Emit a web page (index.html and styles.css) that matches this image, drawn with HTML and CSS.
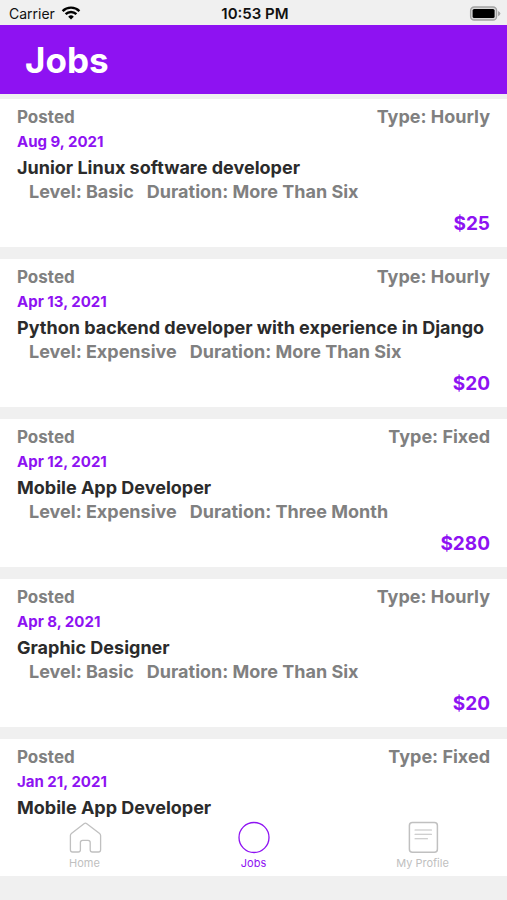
FILE: index.html
```html
<!DOCTYPE html>
<html lang="en">
<head>
<meta charset="utf-8">
<meta name="viewport" content="width=device-width, initial-scale=1">
<title>Jobs</title>
<link rel="stylesheet" href="styles.css">
</head>
<body>
<div class="app">
  <div class="status">
    <div class="carrier">
      <span>Carrier</span>
      <svg width="20" height="15" viewBox="0 0 20 15" fill="none" stroke="#000" stroke-width="2.4" aria-hidden="true">
        <path d="M1.6 5.1a12 12 0 0 1 16.8 0"/>
        <path d="M4.6 8.2a7.7 7.7 0 0 1 10.8 0"/>
        <path d="M10 13.5 7.2 10.7a4 4 0 0 1 5.6 0z" fill="#000" stroke="none"/>
      </svg>
    </div>
    <span class="clock">10:53 PM</span>
    <svg class="battery" width="32" height="16" viewBox="0 0 32 16" aria-hidden="true">
      <rect x="1.6" y="1" width="26" height="13" rx="3.6" fill="#d8d8d8" stroke="#a3a3a3" stroke-width="1.3"/>
      <path d="M29 5q2.4 1 2.4 2.6t-2.4 2.6z" fill="#a8a8a8"/>
      <rect x="3.6" y="3" width="22" height="9" rx="1.6" fill="#000"/>
    </svg>
  </div>
  <header class="header"><h1>Jobs</h1></header>
  <main class="list">
    <article class="job">
      <div class="top"><span class="posted">Posted</span><span class="meta">Type: Hourly</span></div>
      <time class="date">Aug 9, 2021</time>
      <h2>Junior Linux software developer</h2>
      <div class="details meta"><span>Level: Basic</span><span>Duration: More Than Six</span></div>
      <div class="price">$25</div>
    </article>
    <article class="job">
      <div class="top"><span class="posted">Posted</span><span class="meta">Type: Hourly</span></div>
      <time class="date">Apr 13, 2021</time>
      <h2>Python backend developer with experience in Django</h2>
      <div class="details meta"><span>Level: Expensive</span><span>Duration: More Than Six</span></div>
      <div class="price">$20</div>
    </article>
    <article class="job">
      <div class="top"><span class="posted">Posted</span><span class="meta">Type: Fixed</span></div>
      <time class="date">Apr 12, 2021</time>
      <h2>Mobile App Developer</h2>
      <div class="details meta"><span>Level: Expensive</span><span>Duration: Three Month</span></div>
      <div class="price">$280</div>
    </article>
    <article class="job">
      <div class="top"><span class="posted">Posted</span><span class="meta">Type: Hourly</span></div>
      <time class="date">Apr 8, 2021</time>
      <h2>Graphic Designer</h2>
      <div class="details meta"><span>Level: Basic</span><span>Duration: More Than Six</span></div>
      <div class="price">$20</div>
    </article>
    <article class="job">
      <div class="top"><span class="posted">Posted</span><span class="meta">Type: Fixed</span></div>
      <time class="date">Jan 21, 2021</time>
      <h2>Mobile App Developer</h2>
    </article>
  </main>
  <nav class="tabs">
    <a href="#home">
      <svg width="34" height="34" viewBox="0 0 34 34" fill="none" stroke="currentColor" stroke-width="1.3" stroke-linejoin="round" aria-hidden="true">
        <path d="M16.6 2.7 4 12.4q-1 .8-1 2.1v14.3q0 2.2 2.2 2.2h5.6q2.2 0 2.2-2.2v-7.3q0-2.2 2.2-2.2h5.4q2.2 0 2.2 2.2v7.3q0 2.2 2.2 2.2h6q2.2 0 2.2-2.2V14.5q0-1.3-1-2.1L19.4 2.7q-1.4-1-2.8 0z" transform="translate(-.6 0)"/>
      </svg>
      <span>Home</span>
    </a>
    <a class="active" href="#jobs">
      <svg width="34" height="34" viewBox="0 0 34 34" fill="none" stroke="currentColor" stroke-width="1.3" aria-hidden="true">
        <circle cx="17" cy="16.5" r="15"/>
      </svg>
      <span>Jobs</span>
    </a>
    <a href="#profile">
      <svg width="34" height="34" viewBox="0 0 34 34" fill="none" stroke="currentColor" stroke-width="1.1" stroke-linecap="round" aria-hidden="true">
        <rect x="3.4" y="1.6" width="28" height="29.6" rx="3" stroke-width="1.5"/>
        <path d="M9 9h16.5M9 13.3h16.5M9 17.8h12.5"/>
      </svg>
      <span>My Profile</span>
    </a>
  </nav>
</div>
</body>
</html>
```
FILE: styles.css
```css
* {
  box-sizing: border-box;
}

body {
  margin: 0;
  background: #f0f0f0;
  color: #2b2b2b;
  font-family: Inter, "Liberation Sans", sans-serif;
  font-weight: 700;
}

h1,
h2 {
  margin: 0;
}

.app {
  display: flex;
  flex-direction: column;
  height: 100vh;
  padding-bottom: 24px;
}

.status {
  display: grid;
  grid-template-columns: 1fr auto 1fr;
  align-items: center;
  flex: none;
  height: 25px;
  padding: 2px 6px 0 9px;
  color: #111;
  font-size: 14px;
}

.carrier {
  display: flex;
  align-items: center;
  gap: 6px;
  font-weight: 400;
}

.clock {
  font-size: 15px;
  font-weight: 600;
}

.battery {
  justify-self: end;
}

.header {
  flex: none;
  padding: 13px 25px 12px;
  background: #8e12f2;
  color: #fff;
}

.header h1 {
  font-size: 35px;
  line-height: 44px;
}

.list {
  display: flex;
  flex-direction: column;
  gap: 12px;
  flex: 1;
  min-height: 0;
  padding-top: 5px;
  overflow: hidden;
}

.job {
  flex: none;
  padding: 6px 17px 11px;
  background: #fff;
}

.top {
  display: flex;
  justify-content: space-between;
  line-height: 24px;
}

.posted {
  color: #808080;
  font-size: 17px;
}

.meta {
  color: #808080;
  font-size: 18px;
}

.date {
  display: block;
  margin: 3px 0;
  color: #8e12f2;
  font-size: 15px;
  line-height: 20px;
}

.job h2 {
  font-size: 18px;
  line-height: 25px;
}

.details {
  display: flex;
  gap: 13px;
  padding-left: 12px;
  line-height: 24px;
}

.price {
  margin-top: 8px;
  color: #8e12f2;
  font-size: 19px;
  line-height: 24px;
  text-align: right;
}

.tabs {
  display: grid;
  grid-template-columns: repeat(3, 1fr);
  flex: none;
  padding: 4px 0 5px;
  background: #fff;
}

.tabs a {
  display: flex;
  flex-direction: column;
  align-items: center;
  color: #c0c0c0;
  font-size: 11px;
  line-height: 16px;
  font-weight: 400;
  text-decoration: none;
}

.tabs .active {
  color: #8e12f2;
}
```
